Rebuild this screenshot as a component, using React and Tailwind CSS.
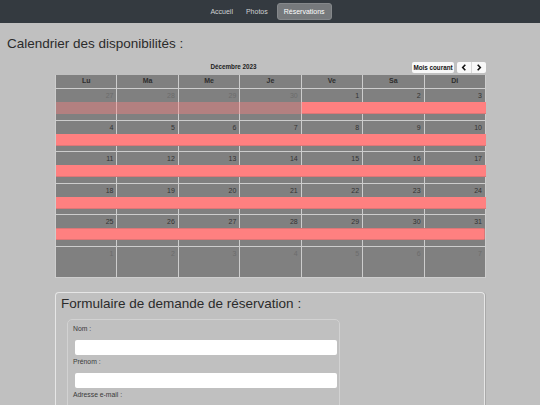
import React from "react";

const Chev = ({ dir }) => (
  <svg width="6" height="7" viewBox="0 0 6 8" className="block">
    {dir === "l" ? (
      <polyline points="4.5,0.8 1.5,4 4.5,7.2" fill="none" stroke="#111" strokeWidth="1.8" />
    ) : (
      <polyline points="1.5,0.8 4.5,4 1.5,7.2" fill="none" stroke="#111" strokeWidth="1.8" />
    )}
  </svg>
);

const days = ["Lu", "Ma", "Me", "Je", "Ve", "Sa", "Di"];
const colStart = [
  "col-start-1",
  "col-start-2",
  "col-start-3",
  "col-start-4",
  "col-start-5",
  "col-start-6",
  "col-start-7",
];

const weeks = [
  { nums: [27, 28, 29, 30, 1, 2, 3], other: [0, 1, 2, 3] },
  { nums: [4, 5, 6, 7, 8, 9, 10], other: [] },
  { nums: [11, 12, 13, 14, 15, 16, 17], other: [] },
  { nums: [18, 19, 20, 21, 22, 23, 24], other: [] },
  { nums: [25, 26, 27, 28, 29, 30, 31], other: [] },
  { nums: [1, 2, 3, 4, 5, 6, 7], other: [0, 1, 2, 3, 4, 5, 6] },
];

function Week({ w, i }) {
  return (
    <div className="grid grid-cols-7 h-[31.5px]">
      {w.nums.map((n, j) => (
        <div
          key={j}
          className={`${colStart[j]} row-start-1 border-r border-b border-[#cdcdcd] text-right pr-[3px] pt-[3px] text-[7px] leading-[8px] ${
            w.other.includes(j) ? "text-[#6c6c6c]" : "text-[#333]"
          }`}
        >
          {n}
        </div>
      ))}
      {i === 0 && (
        <>
          <div className="col-start-1 col-end-5 row-start-1 self-start mt-[13px] h-[12px] bg-[#ff8080]/40" />
          <div className="col-start-5 col-end-8 row-start-1 self-start mt-[13px] h-[12px] bg-[#ff8080] border-b border-[#dc7777]" />
        </>
      )}
      {(i === 1 || i === 2 || i === 3) && (
        <div className="col-start-1 col-end-8 row-start-1 self-start mt-[13px] h-[12px] bg-[#ff8080] border-b border-[#dc7777]" />
      )}
      {i === 4 && (
        <div className="col-start-1 col-end-8 row-start-1 self-start mt-[13px] mr-[1px] h-[12px] bg-[#ff8080] border border-l-0 border-[#dc7777] rounded-r-[2px]" />
      )}
    </div>
  );
}

export default function App() {
  return (
    <div className="min-h-[405px] bg-[#c0c0c0] font-['Liberation_Sans',Arial,sans-serif] overflow-hidden">
      <nav className="h-[23px] bg-[#343a40] flex items-center justify-center text-[7px] leading-[9px]">
        <div className="flex items-center ml-[-4px]">
          <span className="px-[6px] text-[#cfd1d3]">Accueil</span>
          <span className="px-[7px] text-[#cfd1d3]">Photos</span>
          <span className="ml-[2px] px-[6px] h-[17px] flex items-center rounded-[3px] bg-[#76797c] border border-[#85888b] text-white">
            Réservations
          </span>
        </div>
      </nav>

      <h1 className="mt-[13px] ml-[7px] text-[13.5px] leading-[16px] text-[#2b2b2b]">
        Calendrier des disponibilités :
      </h1>

      <div className="mt-[10px] ml-[55px] w-[431px]">
        <div className="h-[11px] flex items-center justify-between mb-[2px]">
          <div />
          <div className="font-bold text-[6.3px] leading-[8px] text-[#222] mb-[2px]">
            Décembre 2023
          </div>
          <div className="flex items-center gap-[3px]">
            <div className="h-[11px] px-[1px] w-[42px] flex items-center justify-center bg-[#f8f8f8] rounded-[2px] font-bold text-[6.3px] text-[#111]">
              Mois courant
            </div>
            <div className="flex h-[11px] rounded-[2px] overflow-hidden">
              <div className="w-[14px] flex items-center justify-center bg-[#f8f8f8]">
                <Chev dir="l" />
              </div>
              <div className="w-[15px] flex items-center justify-center bg-[#f8f8f8] border-l border-[#d8d8d8]">
                <Chev dir="r" />
              </div>
            </div>
          </div>
        </div>

        <div className="bg-[#808080] border-l border-[#cdcdcd]">
          <div className="grid grid-cols-7 h-[14px]">
            {days.map((d) => (
              <div
                key={d}
                className="border-r border-b border-[#cdcdcd] flex items-center justify-center font-bold text-[7px] text-[#2e2e2e]"
              >
                {d}
              </div>
            ))}
          </div>
          {weeks.map((w, i) => (
            <Week key={i} w={w} i={i} />
          ))}
        </div>
      </div>

      <div className="mt-[14px] ml-[55px] w-[430px] h-[140px] border border-b-0 border-[#e6e6e6] rounded-t-[4px] shadow-[1px_0_0_#a9a9a9]">
        <h2 className="ml-[5px] mt-[3px] text-[13.5px] leading-[16px] text-[#2b2b2b]">
          Formulaire de demande de réservation :
        </h2>
        <div className="mt-[7px] ml-[11px] w-[273px] h-[120px] border border-[#d2d2d2] rounded-[5px] pt-[5px] pl-[5px] text-[6.8px] leading-[8px] text-[#3a3a3a]">
          <div>Nom :</div>
          <div className="mt-[7px] ml-[2px] w-[262px] h-[15px] bg-white rounded-[2px]" />
          <div className="mt-[3px]">Prénom :</div>
          <div className="mt-[7px] ml-[2px] w-[262px] h-[15px] bg-white rounded-[2px]" />
          <div className="mt-[3px]">Adresse e-mail :</div>
          <div className="mt-[7px] ml-[2px] w-[262px] h-[15px] bg-white rounded-[2px]" />
        </div>
      </div>
    </div>
  );
}
